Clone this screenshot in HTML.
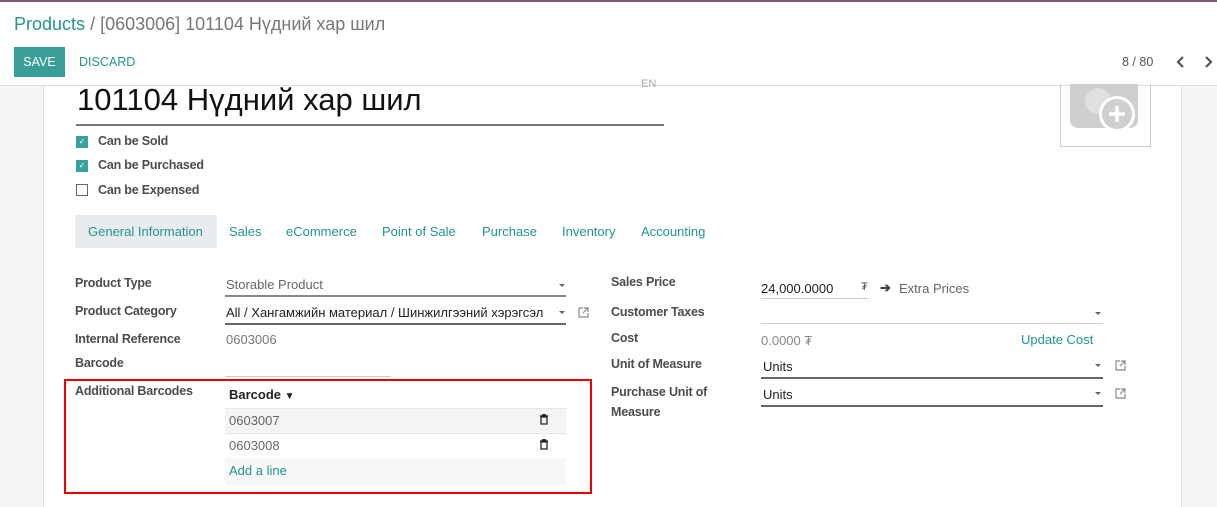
<!DOCTYPE html>
<html><head><meta charset="utf-8"><style>
*{box-sizing:border-box;margin:0;padding:0}
body{width:1217px;height:507px;overflow:hidden;background:#f5f5f5;font-family:"Liberation Sans",sans-serif;font-size:13px;color:#4c4c4c;position:relative}
.top{position:absolute;left:0;top:0;width:1217px;height:86px;background:#fff;border-top:2px solid #7c5a73;border-bottom:1px solid #ddd}
.abs{position:absolute;white-space:nowrap}
.sheet{position:absolute;left:43px;top:86px;width:1139px;height:421px;background:#fff;border-left:1px solid #e2e2e2;border-right:1px solid #e2e2e2}
.lbl{font-weight:bold;color:#4c4c4c;font-size:12.5px;letter-spacing:-0.2px}
.teal{color:#21958f}
.cb{position:absolute;width:12px;height:12px;background:#35a39c;border:1px solid #35a39c;color:#fff;font-size:8px;line-height:10px;text-align:center}
.cb.off{background:#fff;border:1px solid #666}
.line{position:absolute;height:1px;background:#ccc}
.dline{position:absolute;height:2px;background:#666}
.caret{position:absolute;width:0;height:0;border-left:3px solid transparent;border-right:3px solid transparent;border-top:3px solid #666}
.ext{position:absolute}
</style></head><body>
<div class="top">
<div class="abs" style="left:14px;top:12px;font-size:18px;"><span class="teal">Products</span> <span style="color:#777">/ [0603006] 101104 Нүдний хар шил</span></div>
<div class="abs" style="left:14px;top:45px;height:30px;background:#3a9e98;color:#fff;font-size:12.5px;line-height:30px;text-align:center;width:51px">SAVE</div>
<div class="abs teal" style="left:79px;top:53px;font-size:12.5px">DISCARD</div>
<div class="abs" style="left:1122px;top:53px;font-size:12.5px;color:#555">8 / 80</div>
<svg class="abs" style="left:1176px;top:54px" width="10" height="12"><path d="M7 1L2 6l5 5" stroke="#555" stroke-width="2.2" fill="none"/></svg>
<svg class="abs" style="left:1203px;top:54px" width="10" height="12"><path d="M3 1l5 5-5 5" stroke="#555" stroke-width="2.2" fill="none"/></svg>
</div>
<div class="sheet">
<div class="abs" style="left:33px;top:-4px;font-size:31px;color:#111">101104 Нүдний хар шил</div>
<div class="abs" style="left:597px;top:-8px;font-size:11px;color:#aaa">EN</div>
<div class="dline" style="left:32px;top:38px;width:588px;height:2px;background:#777"></div>
<div class="abs" style="left:1016px;top:-2px;width:91px;height:63px;border:1px solid #ccc;border-top:none"></div>
<div class="abs" style="left:1026px;top:-2px;width:68px;height:44px;background:#cfcfcf;border-radius:0 0 8px 8px"></div>
<div class="abs" style="left:1041px;top:2px;width:26px;height:26px;border-radius:50%;background:#fff;opacity:.35"></div>
<div class="abs" style="left:1055px;top:10px;width:36px;height:36px;border-radius:50%;background:#cfcfcf;border:3px solid #fff"></div>
<svg class="abs" style="left:1060px;top:15px" width="26" height="26"><path d="M13 5v16M5 13h16" stroke="#fff" stroke-width="3.5"/></svg>
<div class="cb" style="left:32px;top:50px">✓</div><div class="abs lbl" style="left:54px;top:48px">Can be Sold</div>
<div class="cb" style="left:32px;top:74px">✓</div><div class="abs lbl" style="left:54px;top:72px">Can be Purchased</div>
<div class="cb off" style="left:32px;top:98px"></div><div class="abs lbl" style="left:54px;top:97px">Can be Expensed</div>
<div class="abs" style="left:31px;top:129px;width:142px;height:33px;background:#e9ecef"></div>
<div class="abs teal" style="left:44px;top:138px">General Information</div>
<div class="abs teal" style="left:185px;top:138px">Sales</div>
<div class="abs teal" style="left:242px;top:138px">eCommerce</div>
<div class="abs teal" style="left:338px;top:138px">Point of Sale</div>
<div class="abs teal" style="left:438px;top:138px">Purchase</div>
<div class="abs teal" style="left:518px;top:138px">Inventory</div>
<div class="abs teal" style="left:597px;top:138px">Accounting</div>

<div class="abs lbl" style="left:31px;top:190px">Product Type</div>
<div class="abs" style="left:182px;top:191px;color:#666">Storable Product</div>
<div class="caret" style="left:515px;top:198px"></div>
<div class="dline" style="left:181px;top:209px;width:341px;height:2px;background:#888"></div>
<div class="abs lbl" style="left:31px;top:218px">Product Category</div>
<div class="abs" style="left:182px;top:219px;color:#222;width:326px;overflow:hidden">All / Хангамжийн материал / Шинжилгээний хэрэгсэл</div>
<div class="caret" style="left:515px;top:225px"></div>
<div class="dline" style="left:181px;top:237px;width:341px;height:2px;background:#666"></div>
<svg class="ext" style="left:533px;top:220px" width="13" height="13"><path d="M6 2H2v9h9V7" stroke="#888" stroke-width="1.2" fill="none"/><path d="M7 2h4v4M11 2L6 7" stroke="#888" stroke-width="1.2" fill="none"/></svg>
<div class="abs lbl" style="left:31px;top:246px">Internal Reference</div>
<div class="abs" style="left:182px;top:246px;color:#777">0603006</div>
<div class="abs lbl" style="left:31px;top:270px">Barcode</div>
<div class="line" style="left:181px;top:290px;width:166px"></div>
<div class="abs lbl" style="left:31px;top:298px">Additional Barcodes</div>
<div class="abs" style="left:20px;top:293px;width:528px;height:115px;border:2px solid #e00"></div>
<div class="abs" style="left:185px;top:301px;font-weight:bold;color:#222">Barcode <span style="font-size:10px">▼</span></div>
<div class="abs" style="left:181px;top:322px;width:341px;height:26px;background:#f4f4f4;border-top:1px solid #e6e6e6;border-bottom:1px solid #e6e6e6"></div>
<div class="abs" style="left:185px;top:327px;color:#666">0603007</div>
<svg class="abs" style="left:495px;top:328px" width="10" height="11"><path d="M1 2h8M3.5 2V0.8h3V2M2 3h6v7H2z" stroke="#222" stroke-width="1.3" fill="none"/></svg>
<div class="abs" style="left:185px;top:352px;color:#666">0603008</div>
<svg class="abs" style="left:495px;top:353px" width="10" height="11"><path d="M1 2h8M3.5 2V0.8h3V2M2 3h6v7H2z" stroke="#222" stroke-width="1.3" fill="none"/></svg>
<div class="abs" style="left:181px;top:372px;width:341px;height:27px;background:#f7f7f7"></div>
<div class="abs teal" style="left:185px;top:377px">Add a line</div>

<div class="abs lbl" style="left:567px;top:189px">Sales Price</div>
<div class="abs" style="left:717px;top:195px;color:#222">24,000.0000</div>
<div class="abs" style="left:817px;top:195px;font-size:11px;color:#555">₮</div>
<div class="line" style="left:717px;top:212px;width:108px"></div>
<div class="abs" style="left:836px;top:194px;color:#444;font-weight:bold">➔</div>
<div class="abs" style="left:855px;top:195px;color:#666">Extra Prices</div>
<div class="abs lbl" style="left:567px;top:219px">Customer Taxes</div>
<div class="caret" style="left:1051px;top:226px"></div>
<div class="line" style="left:717px;top:237px;width:342px"></div>
<div class="abs lbl" style="left:567px;top:245px">Cost</div>
<div class="abs" style="left:717px;top:247px;color:#888">0.0000 ₮</div>
<div class="abs teal" style="left:977px;top:246px">Update Cost</div>
<div class="abs lbl" style="left:567px;top:271px">Unit of Measure</div>
<div class="abs" style="left:719px;top:273px;color:#222">Units</div>
<div class="caret" style="left:1051px;top:278px"></div>
<div class="dline" style="left:717px;top:291px;width:342px"></div>
<svg class="ext" style="left:1070px;top:273px" width="13" height="13"><path d="M6 2H2v9h9V7" stroke="#888" stroke-width="1.2" fill="none"/><path d="M7 2h4v4M11 2L6 7" stroke="#888" stroke-width="1.2" fill="none"/></svg>
<div class="abs lbl" style="left:567px;top:299px">Purchase Unit of</div>
<div class="abs lbl" style="left:567px;top:319px">Measure</div>
<div class="abs" style="left:719px;top:301px;color:#222">Units</div>
<div class="caret" style="left:1051px;top:306px"></div>
<div class="dline" style="left:717px;top:319px;width:342px"></div>
<svg class="ext" style="left:1070px;top:301px" width="13" height="13"><path d="M6 2H2v9h9V7" stroke="#888" stroke-width="1.2" fill="none"/><path d="M7 2h4v4M11 2L6 7" stroke="#888" stroke-width="1.2" fill="none"/></svg>
</div>
</body></html>
